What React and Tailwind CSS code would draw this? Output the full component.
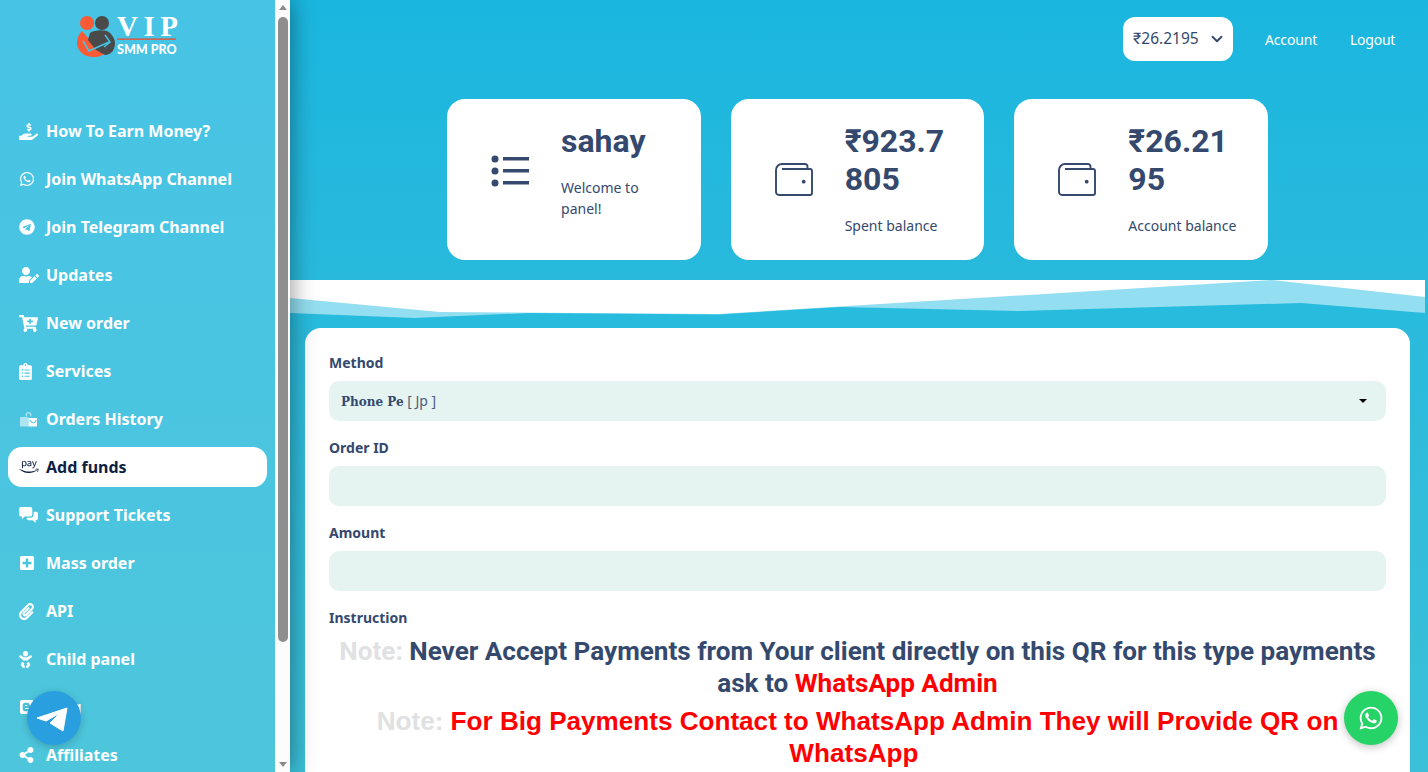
import {
  FaHandHoldingUsd,
  FaWhatsapp,
  FaTelegram,
  FaUserEdit,
  FaCartPlus,
  FaClipboardList,
  FaAmazonPay,
  FaPlusSquare,
  FaPaperclip,
  FaBaby,
  FaShareAlt,
  FaBlogger,
} from "react-icons/fa";
import { ChevronDown } from "lucide-react";

const BagIcon = ({ className }) => (
  <svg viewBox="0 0 20 16" className={className} fill="currentColor">
    <path opacity="0.55" d="M7 5V3.500a3 3 0 0 1 6 0V5h-1.500V3.500a1.500 1.500 0 0 0-3 0V5z" />
    <rect opacity="0.55" x="1" y="6" width="9" height="10" rx="1" />
    <path d="M10 7h9v8a1 1 0 0 1-1 1h-8z" />
    <path d="M12 9a3 3 0 0 0 6 0" fill="none" stroke="#47c4e2" strokeWidth="1" />
  </svg>
);

const BubblesIcon = ({ className }) => (
  <svg viewBox="0 0 20 18" className={className} fill="currentColor">
    <path d="M2 0h10a2 2 0 0 1 2 2v6a2 2 0 0 1-2 2H6l-3 3v-3H2a2 2 0 0 1-2-2V2a2 2 0 0 1 2-2z" />
    <path d="M15.500 5H18a2 2 0 0 1 2 2v5a2 2 0 0 1-2 2h-.500v3l-3-3H10a2 2 0 0 1-1.800-2.500H12a3.500 3.500 0 0 0 3.500-3.500z" />
  </svg>
);

const menu = [
  { label: "How To Earn Money?", icon: FaHandHoldingUsd, size: "h-[17px] w-[19px]" },
  { label: "Join WhatsApp Channel", icon: FaWhatsapp, size: "h-[16px] w-[16px]" },
  { label: "Join Telegram Channel", icon: FaTelegram, size: "h-[16px] w-[16px]" },
  { label: "Updates", icon: FaUserEdit, size: "h-[16px] w-[20px]" },
  { label: "New order", icon: FaCartPlus, size: "h-[17px] w-[19px]" },
  { label: "Services", icon: FaClipboardList, size: "h-[17px] w-[13px]" },
  { label: "Orders History", icon: BagIcon, size: "h-[16px] w-[19px]" },
  { label: "Add funds", icon: FaAmazonPay, size: "h-[18px] w-[20px]", active: true },
  { label: "Support Tickets", icon: BubblesIcon, size: "h-[17px] w-[19px]" },
  { label: "Mass order", icon: FaPlusSquare, size: "h-[16px] w-[16px]" },
  { label: "API", icon: FaPaperclip, size: "h-[17px] w-[15px]" },
  { label: "Child panel", icon: FaBaby, size: "h-[17px] w-[13px]" },
  { label: "Blog", icon: FaBlogger, size: "h-[16px] w-[16px]" },
  { label: "Affiliates", icon: FaShareAlt, size: "h-[16px] w-[15px]" },
];

const Wallet = () => (
  <svg viewBox="0 0 38 33" className="h-[33px] w-[38px]" fill="none" stroke="#34496d" strokeWidth="1.900">
    <path d="M1 7a6 6 0 0 1 6-6h23a2.500 2.500 0 0 1 2.500 2.500V5" />
    <path d="M7 6h28a2 2 0 0 1 2 2v22a2 2 0 0 1-2 2H4a3 3 0 0 1-3-3V7" />
    <circle cx="28.700" cy="18.700" r="1.900" fill="#34496d" stroke="none" />
  </svg>
);

const ListIcon = () => (
  <svg viewBox="0 0 38 32" className="h-[32px] w-[38px]" fill="#34496d">
    <circle cx="4" cy="4" r="3.500" />
    <circle cx="4" cy="16" r="3.500" />
    <circle cx="4" cy="28" r="3.500" />
    <rect x="12" y="2" width="26" height="3.500" />
    <rect x="12" y="14" width="26" height="3.500" />
    <rect x="12" y="26" width="26" height="3.500" />
  </svg>
);

function StatCard({ icon, title, sub }) {
  return (
    <div className="h-[161px] w-[253.67px] rounded-[18px] bg-white pl-[44px] pr-[30px] pt-[23px]">
      <div className="flex items-center">
        <div className="mr-[32px] w-[38px] shrink-0">{icon}</div>
        <div className="min-w-0">
          <div className="break-all font-['Roboto'] text-[32px] leading-[38px] font-bold text-[#34496d]">{title}</div>
          <div className="mt-[17px] font-['Noto_Sans'] text-[14px] leading-[21px] text-[#34496d]">{sub}</div>
        </div>
      </div>
    </div>
  );
}

function Field({ label, children }) {
  return (
    <div className="mb-[16px]">
      <div className="mb-[8px] font-['Noto_Sans'] text-[14px] leading-[21px] font-bold text-[#34496d]">{label}</div>
      {children}
    </div>
  );
}

export default function App() {
  return (
    <div className="relative flex h-screen overflow-hidden bg-gradient-to-b from-[#1ab6df] to-[#3bc0d8]">
      {/* Sidebar */}
      <aside className="relative z-10 flex h-full w-[290px] shrink-0 shadow-[0_0_24px_rgba(0,0,0,0.45)]">
        <div className="h-full w-[275px] overflow-hidden bg-gradient-to-b from-[#47c3e5] to-[#4dc6dc]">
          <div className="flex h-[111px] items-start pl-[76px] pt-[14px]">
            <svg viewBox="0 0 40 44" className="h-[44px] w-[40px] shrink-0">
              <circle cx="11" cy="9" r="7" fill="#fb5a34" />
              <path d="M6 17C2 21 1 26 1 29a16 14 0 0 0 16 14c7 0 11-2 14-6L20 20l-8 4z" fill="#fb5a34" />
              <circle cx="26" cy="9" r="7" fill="#4a4a4a" />
              <path d="M14 19c4-3 16-4 20 0 4 4 5 8 5 10 0 7-4 12-10 12l-9-5-8-10z" fill="#4a4a4a" />
              <path d="M7 27l6 10 20-9" fill="none" stroke="#47c3e5" strokeWidth="1.500" />
              <path d="M29 21l5 7-6 5" fill="none" stroke="#47c3e5" strokeWidth="1.500" />
            </svg>
            <div className="ml-[1px] flex flex-col">
              <div className="font-['Liberation_Serif'] text-[29px] leading-[24px] font-bold tracking-[5.5px] text-white">VIP</div>
              <div className="h-[1px] w-[59px] bg-[#8a8a8a]" />
              <div className="h-[1px] w-[59px] bg-[#d9604a]" />
              <div className="mt-[3px] whitespace-nowrap font-['Lato'] text-[12.5px] leading-[14px] font-black text-white">SMM PRO</div>
            </div>
          </div>
          <nav className="px-[8px]">
            {menu.map(({ label, icon: Icon, size, active }) => (
              <a
                key={label}
                className={`mb-[8px] flex h-[40px] items-center rounded-[14px] pl-[11px] font-['Noto_Sans'] text-[16px] font-bold ${
                  active ? "bg-white text-[#0e1f45]" : "text-white"
                }`}
              >
                <span className="flex w-[27px] shrink-0 items-center">
                  <Icon className={size} />
                </span>
                {label}
              </a>
            ))}
          </nav>
        </div>
        {/* scrollbar */}
        <div className="flex h-full w-[15px] flex-col items-center bg-[#fcfcfc]">
          <div className="mt-[5px] h-0 w-0 border-x-[4px] border-b-[5px] border-x-transparent border-b-[#8b8b8b]" />
          <div className="mt-[7px] h-[625px] w-[10px] rounded-[5px] bg-[#8e8e8e]" />
          <div className="mt-auto mb-[5px] h-0 w-0 border-x-[4px] border-t-[5px] border-x-transparent border-t-[#8b8b8b]" />
        </div>
      </aside>

      {/* Main */}
      <main className="h-full w-[1135px] shrink-0">
        <header className="flex h-[99px] items-start justify-end pt-[17px] pr-[30px]">
          <button className="flex h-[44px] w-[110px] items-center rounded-[12px] bg-white pl-[10px] font-['Noto_Sans'] text-[15.5px] text-[#34496d]">
            <span className="font-['Roboto'] text-[16px]">₹</span>26.2195
            <ChevronDown className="ml-[9px] h-[18px] w-[18px]" strokeWidth={2.5} />
          </button>
          <a className="ml-[32px] mt-[13px] w-[53px] font-['Noto_Sans'] text-[14px] leading-[20px] tracking-[-0.15px] text-white">Account</a>
          <a className="ml-[32px] mt-[13px] w-[45px] font-['Noto_Sans'] text-[14px] leading-[20px] tracking-[-0.25px] text-white">Logout</a>
        </header>

        <section className="flex justify-center gap-[30px]">
          <StatCard icon={<ListIcon />} title="sahay" sub="Welcome to panel!" />
          <StatCard icon={<Wallet />} title="₹923.7805" sub="Spent balance" />
          <StatCard icon={<Wallet />} title="₹26.2195" sub="Account balance" />
        </section>

        <svg viewBox="0 0 1135 48" className="mt-[20px] block h-[48px] w-[1135px]" preserveAspectRatio="none">
          <rect width="1135" height="48" fill="#fff" />
          <polygon points="0,18 150,32 429,34 982,0 1135,17 1135,48 0,48" fill="#93def0" />
          <polygon points="0,33 124,38 239,33 429,34.500 550,27 729,31 1011,23 1135,33 1135,48 0,48" fill="#27bbdd" />
        </svg>

        <section className="mx-[15px] rounded-[16px] bg-white px-[24px] pt-[24px] pb-[24px]">
          <Field label="Method">
            <div className="flex h-[40px] items-center justify-between rounded-[10px] bg-[#e5f4f0] pl-[12px] pr-[19px] text-[14px] text-[#34496d]">
              <span className="pb-[2px]">
                <b className="font-['DejaVu_Serif'] text-[12px]">Phone Pe</b>{" "}
                <span className="font-['Noto_Sans'] text-[#4b5f80]">[ Jp ]</span>
              </span>
              <span className="h-0 w-0 border-x-[4px] border-t-[4px] border-x-transparent border-t-black" />
            </div>
          </Field>
          <Field label="Order ID">
            <div className="h-[40px] rounded-[10px] bg-[#e5f4f0]" />
          </Field>
          <Field label="Amount">
            <div className="h-[40px] rounded-[10px] bg-[#e5f4f0]" />
          </Field>
          <div className="font-['Noto_Sans'] text-[14px] leading-[21px] font-bold text-[#34496d]">Instruction</div>
          <div className="mt-[8px] text-center text-[26.1px] leading-[31.5px] font-bold">
            <p className="font-['Roboto'] text-[#34496d]">
              <span className="text-[#dfe1e3]">Note:</span> Never Accept Payments from Your client directly on this QR for this type payments ask to{" "}
              <span className="text-[#ff0000]">WhatsApp Admin</span>
            </p>
            <p className="mt-[7px] font-['Liberation_Sans'] text-[#ff0000]">
              <span className="text-[#dfe1e3]">Note:</span> For Big Payments Contact to WhatsApp Admin They will Provide QR on WhatsApp{"\u00a0"}
            </p>
          </div>
        </section>
      </main>

      {/* Floating buttons */}
      <a className="absolute left-[27px] top-[691px] z-20 flex h-[54px] w-[54px] items-center justify-center rounded-full bg-[#2a9fdf] shadow-[0_2px_8px_rgba(0,0,0,0.2)]">
        <svg viewBox="0 0 54 54" className="h-[54px] w-[54px]" fill="#fff" stroke="#fff" strokeWidth="1" strokeLinejoin="round">
          <polygon points="10,27 40,17 36,40 23,32 33,22 19,30" />
        </svg>
      </a>
      <a className="absolute left-[1344px] top-[691px] z-20 flex h-[54px] w-[54px] items-center justify-center rounded-full bg-[#25d366] shadow-[0_2px_8px_rgba(0,0,0,0.25)]">
        <FaWhatsapp className="h-[26px] w-[26px] text-white" />
      </a>
    </div>
  );
}
